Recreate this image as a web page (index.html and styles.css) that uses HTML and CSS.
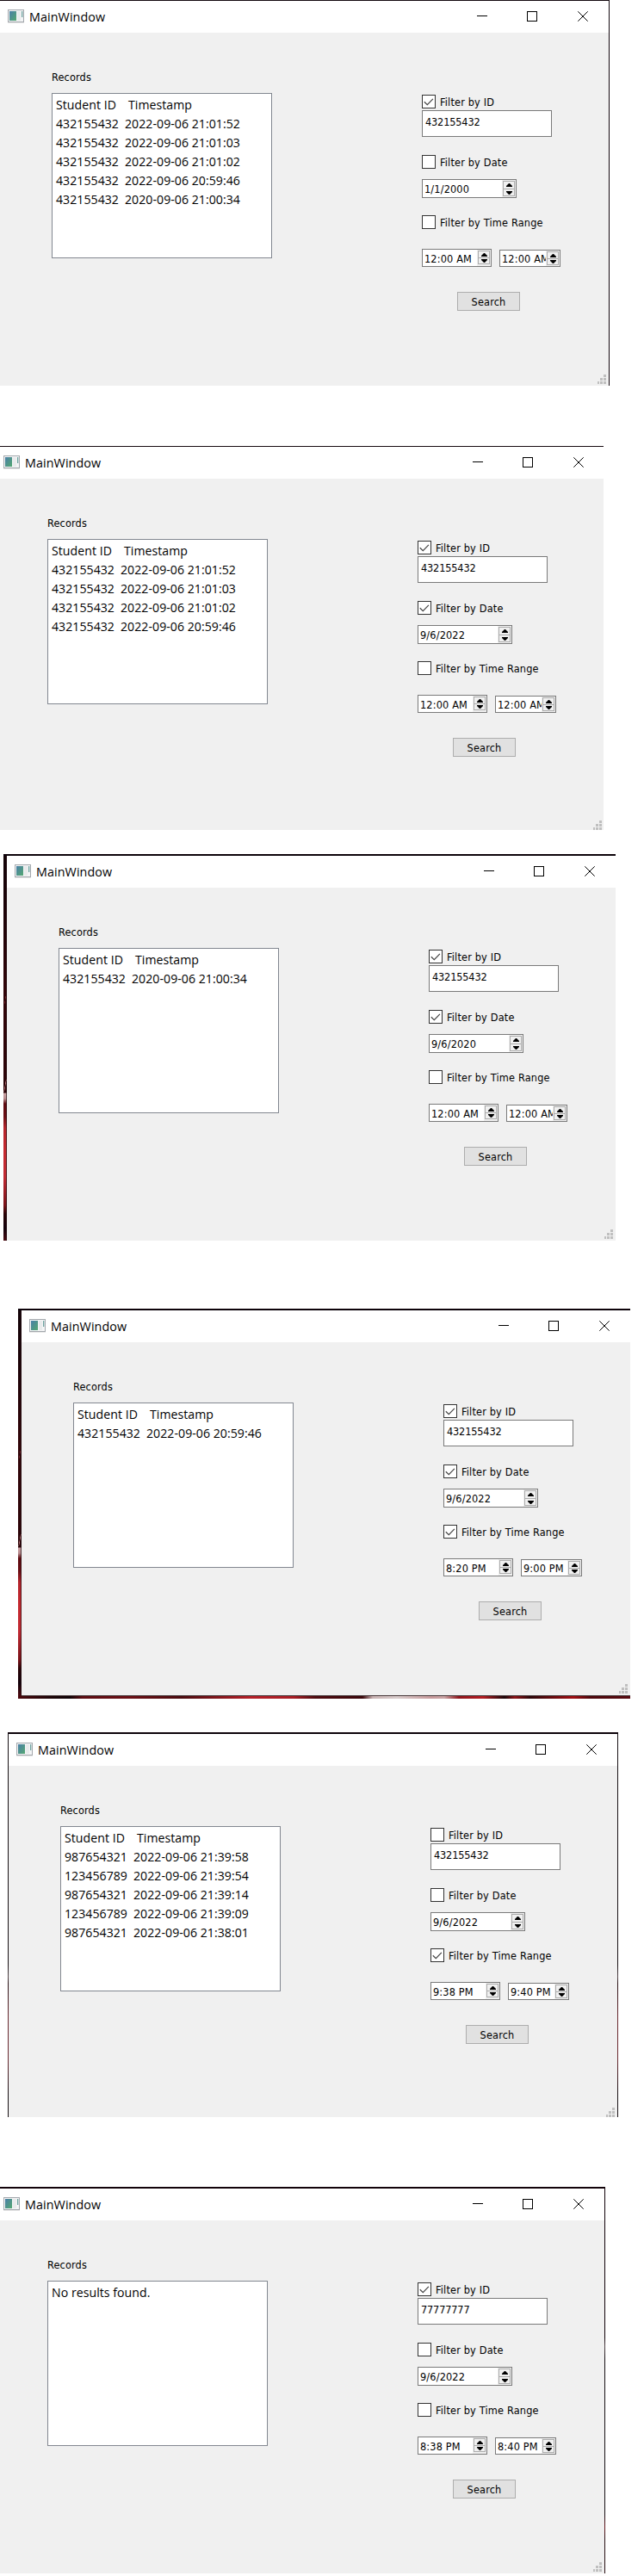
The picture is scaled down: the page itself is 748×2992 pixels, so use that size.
FILE: index.html
```html
<!DOCTYPE html>
<html lang="en">
<head>
<meta charset="utf-8">
<title>MainWindow</title>
<link rel="stylesheet" href="styles.css">
</head>
<body>
<svg class="defs" width="0" height="0" aria-hidden="true">
  <defs>
    <linearGradient id="pane" x1="0" y1="0" x2="1" y2="1">
      <stop offset="0" stop-color="#4a7fa8"/>
      <stop offset="1" stop-color="#55a871"/>
    </linearGradient>
    <symbol id="app" viewBox="0 0 19 16">
      <rect x="0" y="15" width="19" height="1" fill="#e6e6e6"/>
      <rect x=".5" y=".5" width="18" height="14" fill="#f4f5f6" stroke="#a3a8ad"/>
      <rect x="2" y="2" width="8" height="11" fill="url(#pane)"/>
      <rect x="11" y="2" width="4" height="11" fill="#e9ebec"/>
      <rect x="16" y="2" width="1.3" height="7" fill="#6fa3a0"/>
    </symbol>
    <symbol id="min" viewBox="0 0 12 12"><path d="M0 5.5H12" stroke="#000" fill="none"/></symbol>
    <symbol id="max" viewBox="0 0 12 12"><rect x=".5" y=".5" width="11" height="11" stroke="#000" fill="none"/></symbol>
    <symbol id="close" viewBox="0 0 12 12"><path d="M.3 .3 11.7 11.7M11.7 .3 .3 11.7" stroke="#000" fill="none"/></symbol>
    <symbol id="tick" viewBox="0 0 14 14"><path d="M1.8 7.2 5.3 10.6 11.9 3.9" stroke="#444" stroke-width="1.2" fill="none"/></symbol>
    <symbol id="up" viewBox="0 0 7 4"><path d="M0 4V3L3 0H4L7 3V4Z"/></symbol>
    <symbol id="down" viewBox="0 0 7 4"><path d="M0 0V1L3 4H4L7 1V0Z"/></symbol>
    <symbol id="grip" viewBox="0 0 10 11">
      <path fill="#bfbfbf" d="M7 0h3v3H7zM3 4h3v3H3zM7 4h3v3H7zM0 8h2v3H0zM3 8h3v3H3zM7 8h3v3H7z"/>
    </symbol>
  </defs>
</svg>

<section class="frame frame-1">
  <div class="window">
    <header class="titlebar"><svg class="app"><use href="#app"/></svg><h1 class="title">MainWindow</h1>
      <svg class="ctl ctl-min"><use href="#min"/></svg><svg class="ctl ctl-max"><use href="#max"/></svg><svg class="ctl"><use href="#close"/></svg></header>
    <div class="client">
      <div class="records"><div class="caption">Records</div>
        <div class="list">
          <div class="row head"><span>Student ID</span><span>Timestamp</span></div>
          <div class="row"><span>432155432</span><span>2022-09-06 21:01:52</span></div>
          <div class="row"><span>432155432</span><span>2022-09-06 21:01:03</span></div>
          <div class="row"><span>432155432</span><span>2022-09-06 21:01:02</span></div>
          <div class="row"><span>432155432</span><span>2022-09-06 20:59:46</span></div>
          <div class="row"><span>432155432</span><span>2020-09-06 21:00:34</span></div>
        </div></div>
      <div class="filters">
        <div class="check"><span class="box"><svg><use href="#tick"/></svg></span><span class="label">Filter by ID</span></div>
        <div class="idbox">432155432</div>
        <div class="check check-date"><span class="box"></span><span class="label">Filter by Date</span></div>
        <div class="field date"><span class="value">1/1/2000</span><span class="spin"><i><svg><use href="#up"/></svg></i><i><svg><use href="#down"/></svg></i></span></div>
        <div class="check check-time"><span class="box"></span><span class="label">Filter by Time Range</span></div>
        <div class="times">
          <div class="field from"><span class="value">12:00 AM</span><span class="spin"><i><svg><use href="#up"/></svg></i><i><svg><use href="#down"/></svg></i></span></div>
          <div class="field to"><span class="value">12:00 AM</span><span class="spin"><i><svg><use href="#up"/></svg></i><i><svg><use href="#down"/></svg></i></span></div>
        </div>
        <div class="search">Search</div>
      </div>
      <svg class="grip"><use href="#grip"/></svg>
    </div>
  </div>
</section>

<section class="frame frame-2">
  <div class="window">
    <header class="titlebar"><svg class="app"><use href="#app"/></svg><h1 class="title">MainWindow</h1>
      <svg class="ctl ctl-min"><use href="#min"/></svg><svg class="ctl ctl-max"><use href="#max"/></svg><svg class="ctl"><use href="#close"/></svg></header>
    <div class="client">
      <div class="records"><div class="caption">Records</div>
        <div class="list">
          <div class="row head"><span>Student ID</span><span>Timestamp</span></div>
          <div class="row"><span>432155432</span><span>2022-09-06 21:01:52</span></div>
          <div class="row"><span>432155432</span><span>2022-09-06 21:01:03</span></div>
          <div class="row"><span>432155432</span><span>2022-09-06 21:01:02</span></div>
          <div class="row"><span>432155432</span><span>2022-09-06 20:59:46</span></div>
        </div></div>
      <div class="filters">
        <div class="check"><span class="box"><svg><use href="#tick"/></svg></span><span class="label">Filter by ID</span></div>
        <div class="idbox">432155432</div>
        <div class="check check-date"><span class="box"><svg><use href="#tick"/></svg></span><span class="label">Filter by Date</span></div>
        <div class="field date"><span class="value">9/6/2022</span><span class="spin"><i><svg><use href="#up"/></svg></i><i><svg><use href="#down"/></svg></i></span></div>
        <div class="check check-time"><span class="box"></span><span class="label">Filter by Time Range</span></div>
        <div class="times">
          <div class="field from"><span class="value">12:00 AM</span><span class="spin"><i><svg><use href="#up"/></svg></i><i><svg><use href="#down"/></svg></i></span></div>
          <div class="field to"><span class="value">12:00 AM</span><span class="spin"><i><svg><use href="#up"/></svg></i><i><svg><use href="#down"/></svg></i></span></div>
        </div>
        <div class="search">Search</div>
      </div>
      <svg class="grip"><use href="#grip"/></svg>
    </div>
  </div>
</section>

<section class="frame frame-3">
  <div class="window">
    <header class="titlebar"><svg class="app"><use href="#app"/></svg><h1 class="title">MainWindow</h1>
      <svg class="ctl ctl-min"><use href="#min"/></svg><svg class="ctl ctl-max"><use href="#max"/></svg><svg class="ctl"><use href="#close"/></svg></header>
    <div class="client">
      <div class="records"><div class="caption">Records</div>
        <div class="list">
          <div class="row head"><span>Student ID</span><span>Timestamp</span></div>
          <div class="row"><span>432155432</span><span>2020-09-06 21:00:34</span></div>
        </div></div>
      <div class="filters">
        <div class="check"><span class="box"><svg><use href="#tick"/></svg></span><span class="label">Filter by ID</span></div>
        <div class="idbox">432155432</div>
        <div class="check check-date"><span class="box"><svg><use href="#tick"/></svg></span><span class="label">Filter by Date</span></div>
        <div class="field date"><span class="value">9/6/2020</span><span class="spin"><i><svg><use href="#up"/></svg></i><i><svg><use href="#down"/></svg></i></span></div>
        <div class="check check-time"><span class="box"></span><span class="label">Filter by Time Range</span></div>
        <div class="times">
          <div class="field from"><span class="value">12:00 AM</span><span class="spin"><i><svg><use href="#up"/></svg></i><i><svg><use href="#down"/></svg></i></span></div>
          <div class="field to"><span class="value">12:00 AM</span><span class="spin"><i><svg><use href="#up"/></svg></i><i><svg><use href="#down"/></svg></i></span></div>
        </div>
        <div class="search">Search</div>
      </div>
      <svg class="grip"><use href="#grip"/></svg>
    </div>
  </div>
</section>

<section class="frame frame-4">
  <div class="window">
    <header class="titlebar"><svg class="app"><use href="#app"/></svg><h1 class="title">MainWindow</h1>
      <svg class="ctl ctl-min"><use href="#min"/></svg><svg class="ctl ctl-max"><use href="#max"/></svg><svg class="ctl"><use href="#close"/></svg></header>
    <div class="client">
      <div class="records"><div class="caption">Records</div>
        <div class="list">
          <div class="row head"><span>Student ID</span><span>Timestamp</span></div>
          <div class="row"><span>432155432</span><span>2022-09-06 20:59:46</span></div>
        </div></div>
      <div class="filters">
        <div class="check"><span class="box"><svg><use href="#tick"/></svg></span><span class="label">Filter by ID</span></div>
        <div class="idbox">432155432</div>
        <div class="check check-date"><span class="box"><svg><use href="#tick"/></svg></span><span class="label">Filter by Date</span></div>
        <div class="field date"><span class="value">9/6/2022</span><span class="spin"><i><svg><use href="#up"/></svg></i><i><svg><use href="#down"/></svg></i></span></div>
        <div class="check check-time"><span class="box"><svg><use href="#tick"/></svg></span><span class="label">Filter by Time Range</span></div>
        <div class="times">
          <div class="field from"><span class="value">8:20 PM</span><span class="spin"><i><svg><use href="#up"/></svg></i><i><svg><use href="#down"/></svg></i></span></div>
          <div class="field to"><span class="value">9:00 PM</span><span class="spin"><i><svg><use href="#up"/></svg></i><i><svg><use href="#down"/></svg></i></span></div>
        </div>
        <div class="search">Search</div>
      </div>
      <svg class="grip"><use href="#grip"/></svg>
    </div>
  </div>
</section>

<section class="frame frame-5">
  <div class="window">
    <header class="titlebar"><svg class="app"><use href="#app"/></svg><h1 class="title">MainWindow</h1>
      <svg class="ctl ctl-min"><use href="#min"/></svg><svg class="ctl ctl-max"><use href="#max"/></svg><svg class="ctl"><use href="#close"/></svg></header>
    <div class="client">
      <div class="records"><div class="caption">Records</div>
        <div class="list">
          <div class="row head"><span>Student ID</span><span>Timestamp</span></div>
          <div class="row"><span>987654321</span><span>2022-09-06 21:39:58</span></div>
          <div class="row"><span>123456789</span><span>2022-09-06 21:39:54</span></div>
          <div class="row"><span>987654321</span><span>2022-09-06 21:39:14</span></div>
          <div class="row"><span>123456789</span><span>2022-09-06 21:39:09</span></div>
          <div class="row"><span>987654321</span><span>2022-09-06 21:38:01</span></div>
        </div></div>
      <div class="filters">
        <div class="check"><span class="box"></span><span class="label">Filter by ID</span></div>
        <div class="idbox">432155432</div>
        <div class="check check-date"><span class="box"></span><span class="label">Filter by Date</span></div>
        <div class="field date"><span class="value">9/6/2022</span><span class="spin"><i><svg><use href="#up"/></svg></i><i><svg><use href="#down"/></svg></i></span></div>
        <div class="check check-time"><span class="box"><svg><use href="#tick"/></svg></span><span class="label">Filter by Time Range</span></div>
        <div class="times">
          <div class="field from"><span class="value">9:38 PM</span><span class="spin"><i><svg><use href="#up"/></svg></i><i><svg><use href="#down"/></svg></i></span></div>
          <div class="field to"><span class="value">9:40 PM</span><span class="spin"><i><svg><use href="#up"/></svg></i><i><svg><use href="#down"/></svg></i></span></div>
        </div>
        <div class="search">Search</div>
      </div>
      <svg class="grip"><use href="#grip"/></svg>
    </div>
  </div>
</section>

<section class="frame frame-6">
  <div class="window">
    <header class="titlebar"><svg class="app"><use href="#app"/></svg><h1 class="title">MainWindow</h1>
      <svg class="ctl ctl-min"><use href="#min"/></svg><svg class="ctl ctl-max"><use href="#max"/></svg><svg class="ctl"><use href="#close"/></svg></header>
    <div class="client">
      <div class="records"><div class="caption">Records</div>
        <div class="list">
          <div class="row message">No results found.</div>
        </div></div>
      <div class="filters">
        <div class="check"><span class="box"><svg><use href="#tick"/></svg></span><span class="label">Filter by ID</span></div>
        <div class="idbox">77777777</div>
        <div class="check check-date"><span class="box"></span><span class="label">Filter by Date</span></div>
        <div class="field date"><span class="value">9/6/2022</span><span class="spin"><i><svg><use href="#up"/></svg></i><i><svg><use href="#down"/></svg></i></span></div>
        <div class="check check-time"><span class="box"></span><span class="label">Filter by Time Range</span></div>
        <div class="times">
          <div class="field from"><span class="value">8:38 PM</span><span class="spin"><i><svg><use href="#up"/></svg></i><i><svg><use href="#down"/></svg></i></span></div>
          <div class="field to"><span class="value">8:40 PM</span><span class="spin"><i><svg><use href="#up"/></svg></i><i><svg><use href="#down"/></svg></i></span></div>
        </div>
        <div class="search">Search</div>
      </div>
      <svg class="grip"><use href="#grip"/></svg>
    </div>
  </div>
</section>
</body>
</html>
```

FILE: styles.css
```css
* { box-sizing: border-box; }

html { background: #fff; }

body {
  display: flow-root;
  margin: 0;
  width: 748px;
  height: 2992px;
  overflow: hidden;
  color: #000;
  font: 12.6px/16px "DejaVu Sans Condensed", "DejaVu Sans", sans-serif;
  letter-spacing: .15px;
}

svg { display: block; flex: none; }
.defs { height: 0; }

/* Each frame shows the strip of dark desktop around one window. */
.frame {
  overflow: hidden;
  background: #150a10;
}

.frame-1 { width: 708px; height: 448px; padding-top: 1px; }
.frame-2 { width: 701px; height: 446px; margin-top: 70px; padding-top: 1px; }
.frame-3 {
  width: 711px; height: 449px; margin: 28px 0 0 4px; padding: 2px 0 0 4px;
  background:
    linear-gradient(#12030a, #07030a) 0 0 / 100% 2px no-repeat,
    linear-gradient(100deg, transparent 45%, #7c2a30 50%, transparent 60%) 0 164px / 4px 10px no-repeat,
    linear-gradient(100deg, transparent 40%, #c07a7c 50%, transparent 60%) 0 262px / 4px 14px no-repeat,
    linear-gradient(to right, transparent 3px, rgba(40, 20, 24, .7) 3px) 0 0 / 4px 100% no-repeat,
    linear-gradient(#140408 0, #1b0207 60px, #320509 160px, #2b0408 270px, #2b0408 277px, #c9a0a2 278px, #b88c8e 284px, #5e0a10 290px, #6b0e14 305px, #b5242c 318px, #c5292f 345px, #c12a33 375px, #7a1218 408px, #2a0306 418px, #12010a 435px, #4a0a10 449px);
}
.frame-4 {
  width: 711px; height: 453px; margin: 79px 0 0 21px; padding: 2px 0 4px 4px;
  background:
    linear-gradient(#12030a, #07030a) 0 0 / 100% 2px no-repeat,
    linear-gradient(#4a3a3c, #4a3a3c) 4px 449px / 100% 1px no-repeat,
    linear-gradient(to right, #4a070c 0, #1a0306 40px, #0f0205 60px, #5c0c12 75px, #6a0e14 130px, #4a0a0e 190px, #b51f28 270px, #a81c24 320px, #4d0a0f 345px, #3a060a 400px, #c9b3b3 412px, #d8cccc 440px, #c79a9c 480px, #c9a4a5 495px, #8e151c 512px, #b41c22 540px, #1a0407 565px, #8b1217 577px, #2b0508 595px, #a00d12 645px, #4c060b 665px, #560910 100%) 0 449px / 100% 4px no-repeat,
    linear-gradient(100deg, transparent 45%, #7c2a30 50%, transparent 60%) 0 164px / 4px 10px no-repeat,
    linear-gradient(100deg, transparent 40%, #c07a7c 50%, transparent 60%) 0 262px / 4px 14px no-repeat,
    linear-gradient(to right, transparent 3px, rgba(40, 20, 24, .7) 3px) 0 0 / 4px 100% no-repeat,
    linear-gradient(#140408 0, #1b0207 60px, #320509 160px, #2b0408 277px, #c9a0a2 278px, #b88c8e 284px, #5e0a10 290px, #6b0e14 305px, #b5242c 318px, #c5292f 345px, #c12a33 375px, #7a1218 408px, #2a0306 418px, #12010a 435px, #4a0a10 449px);
}
.frame-5 {
  width: 709px; height: 447px; margin: 39px 0 0 9px; padding: 2px 0 0 1px;
  background:
    linear-gradient(#12030a, #07030a) 0 0 / 100% 2px no-repeat,
    linear-gradient(#1a1216 0, #1a1216 270px, #55474b 284px, #2a1418 292px, #6a2a30 330px, #6a2a30 380px, #1a1216 420px);
}
.frame-6 {
  width: 703px; height: 449px; margin-top: 81px; padding-top: 2px;
  background: linear-gradient(#12030a 0, #12030a 175px, #55474b 185px, #1a1216 200px, #1a1216 380px, #6a1a20 395px, #2a1216 410px);
}

.window { width: 707px; }
.frame-2 .window,
.frame-6 .window { margin-left: -5px; }

.titlebar {
  display: flex;
  align-items: flex-start;
  height: 37px;
  padding: 10px 24px 0 9px;
  background: #fff;
}
.app { width: 19px; height: 16px; }
.title {
  flex: 1;
  margin: -2px 0 0 6px;
  font: 400 14.3px/22px "Open Sans", "Noto Sans", sans-serif;
  letter-spacing: .1px;
}
.ctl { width: 12px; height: 12px; margin-top: 2px; }
.ctl-min { margin-right: 46px; }
.ctl-max { margin-right: 47px; }

.client {
  position: relative;
  display: flex;
  height: 410px;
  background: #f0f0f0;
}

.records { width: 256px; margin: 44px 174px 0 60px; }
.list {
  height: 192px;
  margin-top: 10px;
  padding: 2px 0 0 4px;
  border: 1px solid #828790;
  background: #fff;
}
.row {
  display: grid;
  grid-template-columns: 80px 1fr;
  font: 14.1px/22px "Open Sans", "Noto Sans", sans-serif;
  letter-spacing: .05px;
  white-space: nowrap;
}
.head { grid-template-columns: 84px 1fr; }
.message { display: block; }

.filters { width: 161px; margin-top: 72px; }
.check { display: flex; height: 16px; }
.box { width: 16px; height: 16px; border: 1px solid #333; background: #fff; }
.box svg { width: 14px; height: 14px; }
.label {
  width: 120px;
  height: 19px;
  margin-left: 5px;
  padding-top: 1px;
  letter-spacing: .17px;
  white-space: nowrap;
}
.idbox {
  width: 151px;
  height: 31px;
  margin-top: 2px;
  padding: 5px 0 0 3px;
  border: 1px solid #7a7a7a;
  background: #fff;
  letter-spacing: -.15px;
}
.check-date { margin-top: 21px; }
.check-time { margin-top: 20px; }

.field {
  display: flex;
  border: 1px solid #7a7a7a;
  background: linear-gradient(to left, #f0f0f0 16px, #fff 16px);
}
.value {
  flex: 1;
  min-width: 0;
  padding: 3px 0 0 2px;
  overflow: hidden;
  white-space: nowrap;
}
.spin {
  display: flex;
  flex-direction: column;
  width: 14px;
  height: 16px;
  margin: 1px 1px 0;
  border: 1px solid #acacac;
}
.spin i {
  display: flex;
  flex: 1;
  align-items: center;
  justify-content: center;
}
.spin i + i { flex: none; height: 7px; border-top: 1px solid #acacac; }
.spin svg { width: 7px; height: 4px; }

.date { width: 110px; height: 22px; margin-top: 12px; }
.date .spin { height: 18px; }
.date .spin i + i { height: 8px; }
.times { display: flex; align-items: flex-end; gap: 9px; margin-top: 23px; }
.from { width: 81px; height: 21px; }
.to { width: 71px; height: 20px; }
.to .value { padding-top: 2px; }

.search {
  width: 73px;
  height: 22px;
  margin: 29px 0 0 41px;
  padding-top: 3px;
  border: 1px solid #adadad;
  background: #e1e1e1;
  text-align: center;
}

/* Size grip sits over the client area's bottom-right corner. */
.grip { position: absolute; right: 3px; top: 397px; width: 10px; height: 11px; }
```
